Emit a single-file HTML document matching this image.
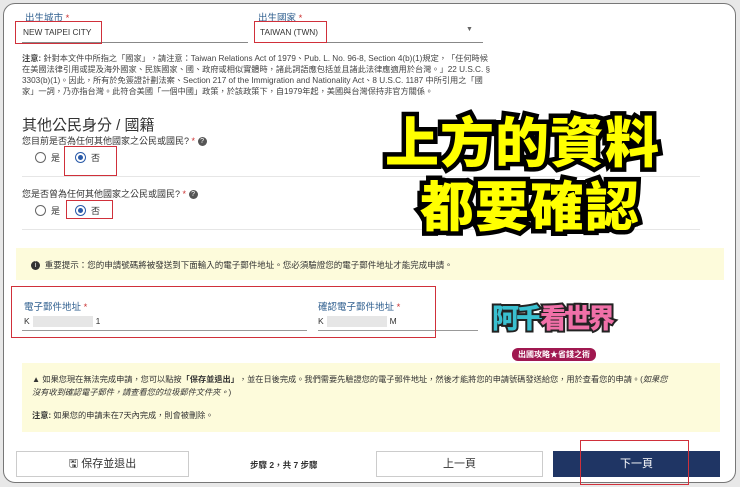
<!DOCTYPE html>
<html><head><meta charset="utf-8"><style>
*{margin:0;padding:0;box-sizing:border-box}
body{width:740px;height:487px;background:#e8e8e8;position:relative;overflow:hidden;font-family:"Liberation Sans","Noto Sans CJK TC",sans-serif;color:#333}
.frame{position:absolute;left:3px;top:3px;width:733px;height:480px;background:#fff;border:1.5px solid #777;border-radius:12px;overflow:hidden}
.a{position:absolute;white-space:nowrap}
.lbl{font-size:9.5px;color:#2f5f8f}
.lbl b{color:#c33;font-weight:normal}
.red{position:absolute;border:1.6px solid #d0303a}
.ul{position:absolute;height:1px;background:#888}
.div{position:absolute;height:1px;background:#e6e6e6}
.radio{position:absolute;width:11px;height:11px;border:1.3px solid #666;border-radius:50%}
.radio.on{border-color:#2a5aa8}
.radio.on:after{content:"";position:absolute;left:2px;top:2px;width:5px;height:5px;border-radius:50%;background:#2a5aa8}
.note{font-size:8.2px;color:#444;line-height:11px}
.yel{position:absolute;background:#fdfbdb}
.btn{position:absolute;top:451px;height:26px;border:1px solid #ccc;background:#fff;font-size:11px;text-align:center;line-height:24px;color:#333}
.big{position:absolute;font-weight:900;font-size:54px;color:#ffff00;-webkit-text-stroke:9px #000;paint-order:stroke fill;font-family:"Noto Sans CJK TC",sans-serif;letter-spacing:1px;line-height:1}
.q{font-size:9px;color:#333}
.help{display:inline-block;width:9px;height:9px;border-radius:50%;background:#555;color:#fff;font-size:7px;text-align:center;line-height:9px;vertical-align:middle}
</style></head><body>
<div class="frame"></div>
<div class="a lbl" style="left:25px;top:10px">出生城市 <b>*</b></div>
<div class="a" style="left:23px;top:27px;font-size:8.3px">NEW TAIPEI CITY</div>
<div class="ul" style="left:22px;top:42px;width:226px"></div>
<div class="red" style="left:15px;top:21px;width:87px;height:23px"></div>
<div class="a lbl" style="left:258px;top:10px">出生國家 <b>*</b></div>
<div class="a" style="left:260px;top:27px;font-size:8.3px">TAIWAN (TWN)</div>
<div class="a" style="left:466px;top:26px;font-size:7px;color:#666">▼</div>
<div class="ul" style="left:258px;top:42px;width:225px"></div>
<div class="red" style="left:254px;top:21px;width:73px;height:22px"></div>
<div class="a note" style="left:22px;top:53px">
<b>注意:</b> 針對本文件中所指之「國家」，請注意：Taiwan Relations Act of 1979、Pub. L. No. 96-8, Section 4(b)(1)規定，「任何時候<br>在美國法律引用或提及海外國家、民族國家、國、政府或相似實體時，諸此詞語應包括並且諸此法律應適用於台灣。」22 U.S.C. §<br>3303(b)(1)。因此，所有於免簽證計劃法案、Section 217 of the Immigration and Nationality Act、8 U.S.C. 1187 中所引用之「國<br>家」一詞，乃亦指台灣。此符合美國「一個中國」政策，於該政策下，自1979年起，美國與台灣保持非官方關係。</div>
<div class="a" style="left:22px;top:114px;font-size:15px;color:#333">其他公民身分 / 國籍</div>
<div class="a q" style="left:22px;top:134px">您目前是否為任何其他國家之公民或國民? <span style="color:#c33">*</span> <span class="help">?</span></div>
<div class="radio" style="left:35px;top:152px"></div><div class="a q" style="left:51px;top:151px">是</div>
<div class="radio on" style="left:75px;top:152px"></div><div class="a q" style="left:91px;top:151px">否</div>
<div class="red" style="left:64px;top:146px;width:53px;height:30px"></div>
<div class="div" style="left:22px;top:176px;width:678px"></div>
<div class="a q" style="left:22px;top:187px">您是否曾為任何其他國家之公民或國民? <span style="color:#c33">*</span> <span class="help">?</span></div>
<div class="radio" style="left:35px;top:205px"></div><div class="a q" style="left:51px;top:204px">是</div>
<div class="radio on" style="left:75px;top:205px"></div><div class="a q" style="left:91px;top:204px">否</div>
<div class="red" style="left:66px;top:200px;width:47px;height:19px"></div>
<div class="div" style="left:22px;top:229px;width:678px"></div>
<div class="yel" style="left:16px;top:248px;width:708px;height:32px"></div>
<div class="a" style="left:31px;top:259px;font-size:8.5px;color:#333"><span class="help" style="background:#333">i</span>&nbsp; 重要提示：您的申請號碼將被發送到下面輸入的電子郵件地址。您必須驗證您的電子郵件地址才能完成申請。</div>
<div class="a lbl" style="left:24px;top:299px">電子郵件地址 <b>*</b></div>
<div class="a" style="left:24px;top:316px;font-size:8.5px">K<span style="display:inline-block;width:60px;height:11px;background:#e6e6e6;margin:0 3px;vertical-align:middle"></span>1</div>
<div class="ul" style="left:22px;top:330px;width:285px;background:#999"></div>
<div class="a lbl" style="left:318px;top:299px">確認電子郵件地址 <b>*</b></div>
<div class="a" style="left:318px;top:316px;font-size:8.5px">K<span style="display:inline-block;width:60px;height:11px;background:#e6e6e6;margin:0 3px;vertical-align:middle"></span>M</div>
<div class="ul" style="left:318px;top:330px;width:160px;background:#999"></div>
<div class="red" style="left:11px;top:286px;width:425px;height:52px"></div>
<div class="a" style="left:492px;top:297px;font-size:27px;font-weight:900;font-family:'Noto Sans CJK TC',sans-serif;-webkit-text-stroke:4px #222;paint-order:stroke fill;letter-spacing:-3px"><span style="color:#3ac0d0">阿千</span><span style="color:#f070a8">看世界</span></div>
<div class="a" style="left:512px;top:348px;width:84px;height:13px;background:#a01850;border-radius:6px;color:#fff;font-size:8px;text-align:center;line-height:13px;font-weight:bold">出國攻略★省錢之術</div>
<div class="yel" style="left:22px;top:363px;width:698px;height:69px"></div>
<div class="a" style="left:32px;top:373px;font-size:8.2px;line-height:13px;color:#333">▲ 如果您現在無法完成申請，您可以點按<b>「保存並退出」</b>，並在日後完成。我們需要先驗證您的電子郵件地址，然後才能將您的申請號碼發送給您，用於查看您的申請。(<i>如果您</i><br><i>沒有收到確認電子郵件，請查看您的垃圾郵件文件夾。</i>)</div>
<div class="a" style="left:32px;top:409px;font-size:8.2px;color:#333"><b>注意:</b> 如果您的申請未在7天內完成，則會被刪除。</div>
<div class="btn" style="left:16px;width:173px">🖫 保存並退出</div>
<div class="a" style="left:250px;top:459px;font-size:8.5px;font-weight:bold">步驟 2，共 7 步驟</div>
<div class="btn" style="left:376px;width:167px">上一頁</div>
<div class="btn" style="left:553px;width:167px;background:#1f3564;border-color:#1f3564;color:#fff">下一頁</div>
<div class="red" style="left:580px;top:440px;width:109px;height:45px"></div>
<div class="big" style="left:385px;top:112px">上方的資料</div>
<div class="big" style="left:420px;top:176px">都要確認</div>
</body></html>
